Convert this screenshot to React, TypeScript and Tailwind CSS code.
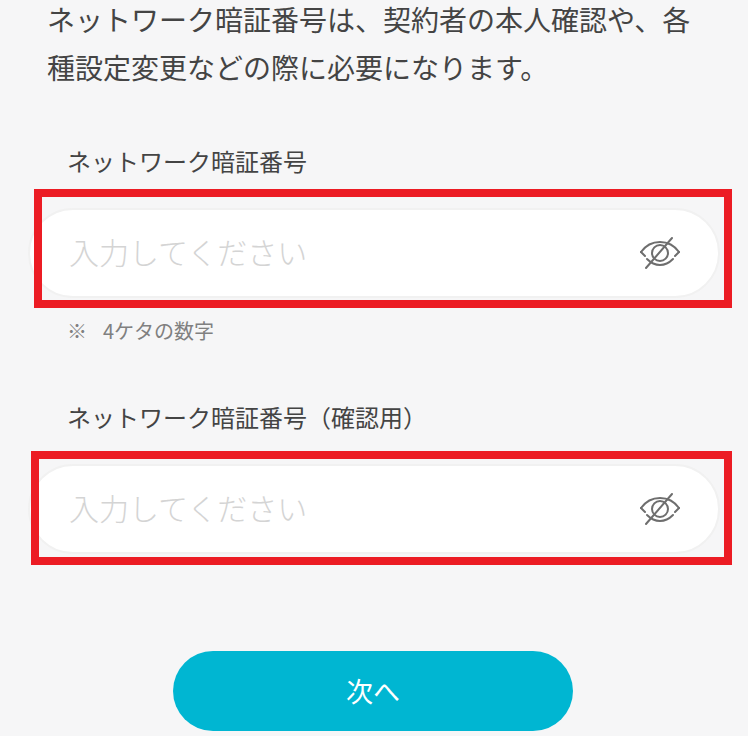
const font = "font-['Noto_Sans_CJK_JP','Noto_Sans',sans-serif]"

const EyeOff = () => (
  <svg width="40" height="34" viewBox="0 0 40 34" fill="none" stroke="#6e6e6e" strokeWidth="2" strokeLinecap="round" strokeLinejoin="round">
    <path d="M1 16C6 9 12 6 20 6S34 9 39 16" />
    <path d="M1 16L5 20M39 16L35 20" />
    <path d="M7 23C11 27 15 29 20 29S29 27 33 23" />
    <circle cx="20" cy="17" r="8" />
    <path d="M6 32L32 2" />
  </svg>
)

const Field = ({ label, gap, frame }: { label: string; gap: string; frame: string }) => (
  <div>
    <div className="pl-[67px] text-[24px] leading-[34px] text-[#444444]">{label}</div>
    <div className={`relative ml-[28px] mr-[28px] ${gap}`}>
      <div className="flex h-[90px] items-center justify-between rounded-full border-2 border-[#f1f1f1] bg-white pl-[39px] pr-[38px]">
        <span className="pb-[4px] text-[30px] font-light text-[#d4d4d4]">入力してください</span>
        <EyeOff />
      </div>
      <div className={`absolute border-[8px] border-[#ec1c24] ${frame}`} />
    </div>
  </div>
)

export default function App() {
  return (
    <div className={`h-[736px] w-[748px] overflow-hidden bg-[#f6f6f7] ${font}`}>
      <p className="-mt-[5px] pl-[47px] pr-[40px] text-[28px] leading-[48px] text-[#444444]">
        ネットワーク暗証番号は、契約者の本人確認や、各種設定変更などの際に必要になります。
      </p>
      <div className="mt-[53px]">
        <Field label="ネットワーク暗証番号" gap="mt-[30px]" frame="left-[6px] -top-[19px] -right-[12px] -bottom-[10px]" />
      </div>
      <div className="mt-[19px] pl-[67px] text-[20px] leading-[28px] text-[#808080]">
        ※<span className="ml-[16px]">4ケタの数字</span>
      </div>
      <div className="mt-[55px]">
        <Field label="ネットワーク暗証番号（確認用）" gap="mt-[30px]" frame="left-[3px] -top-[13px] -right-[12px] -bottom-[11px]" />
      </div>
      <button className="mt-[97px] ml-[173px] flex h-[80px] w-[400px] items-center justify-center rounded-full bg-[#00b6d2] text-[27px] text-white">
        次へ
      </button>
    </div>
  )
}
